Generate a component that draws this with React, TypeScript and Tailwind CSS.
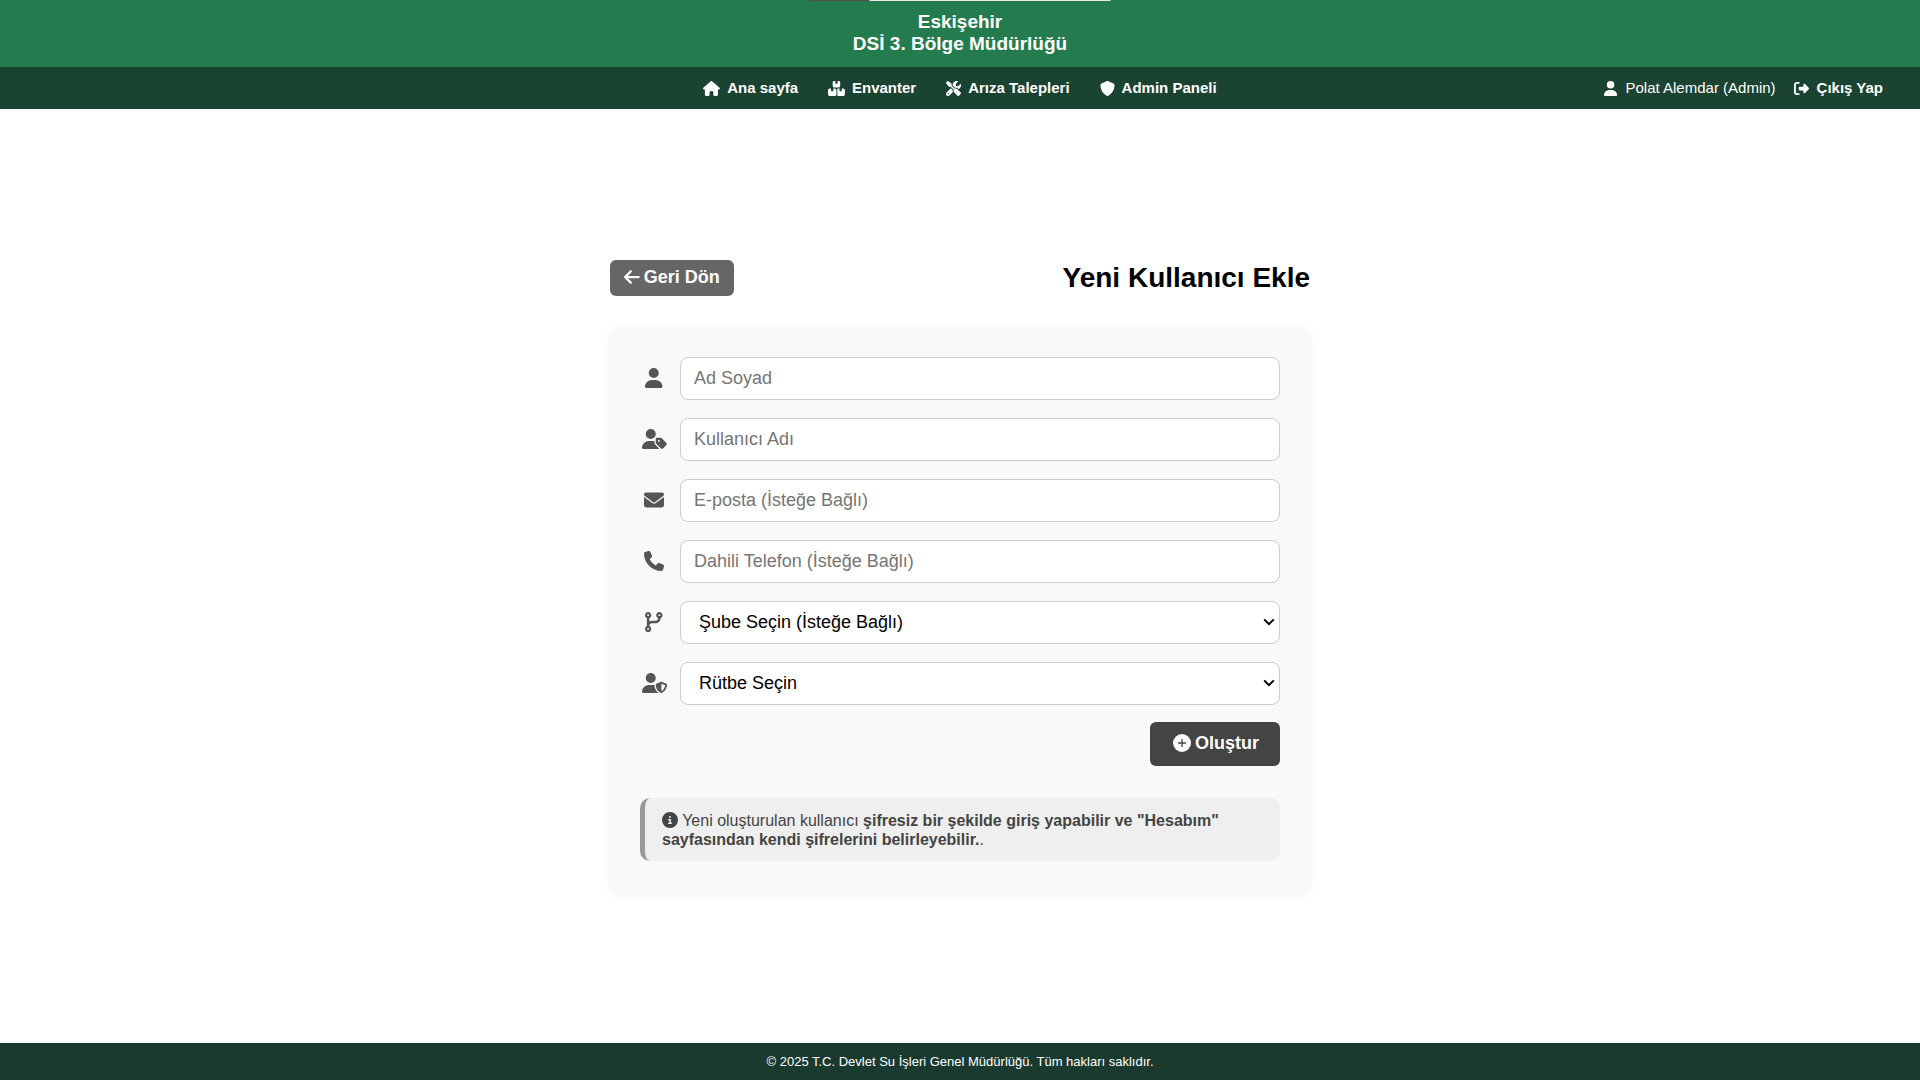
import type { ReactNode } from "react";
import {
  FaArrowLeft,
  FaBoxesStacked,
  FaCircleInfo,
  FaCodeBranch,
  FaEnvelope,
  FaHouse,
  FaPhone,
  FaRightFromBracket,
  FaScrewdriverWrench,
  FaShield,
  FaUser,
  FaUserShield,
  FaUserTag,
} from "react-icons/fa6";

const narrowIcon = "h-[1em] w-[0.875em] shrink-0";
const squareIcon = "h-[1em] w-[1em] shrink-0";
const wideIcon = "h-[1em] w-[1.125em] shrink-0";
const extraWideIcon = "h-[1em] w-[1.25em] shrink-0";

const navItems = [
  { label: "Ana sayfa", icon: <FaHouse className={wideIcon} /> },
  { label: "Envanter", icon: <FaBoxesStacked className={wideIcon} /> },
  { label: "Arıza Talepleri", icon: <FaScrewdriverWrench className={squareIcon} /> },
  { label: "Admin Paneli", icon: <FaShield className={squareIcon} /> },
];

const textFields = [
  { id: "full-name", label: "Ad Soyad", type: "text", icon: <FaUser className={narrowIcon} /> },
  { id: "username", label: "Kullanıcı Adı", type: "text", icon: <FaUserTag className={extraWideIcon} /> },
  { id: "email", label: "E-posta (İsteğe Bağlı)", type: "email", icon: <FaEnvelope className={squareIcon} /> },
  { id: "phone", label: "Dahili Telefon (İsteğe Bağlı)", type: "tel", icon: <FaPhone className={squareIcon} /> },
];

const selectFields = [
  { id: "branch", label: "Şube Seçin (İsteğe Bağlı)", icon: <FaCodeBranch className={narrowIcon} /> },
  { id: "rank", label: "Rütbe Seçin", icon: <FaUserShield className={extraWideIcon} /> },
];

function PlusCircle() {
  return (
    <svg viewBox="0 0 18 18" className="size-[18px] shrink-0" aria-hidden="true">
      <circle cx="9" cy="9" r="9" fill="currentColor" />
      <path d="M9 5.5v7M5.5 9h7" stroke="#444444" strokeWidth="1.3" strokeLinecap="round" />
    </svg>
  );
}

function Chevron() {
  return (
    <svg
      viewBox="0 0 12 8"
      className="pointer-events-none absolute top-1/2 right-[5px] h-2 w-3 -translate-y-1/2"
      aria-hidden="true"
    >
      <path d="M1.2 1.4 6 6.2l4.8-4.8" fill="none" stroke="black" strokeWidth="2" />
    </svg>
  );
}

function FieldRow({ id, label, icon, children }: { id: string; label: string; icon: ReactNode; children: ReactNode }) {
  return (
    <div className="flex items-center gap-3">
      <label htmlFor={id} aria-label={label} className="flex w-7 shrink-0 justify-center text-xl text-[#555555]">
        {icon}
      </label>
      {children}
    </div>
  );
}

export default function App() {
  return (
    <div className="relative flex min-h-screen flex-col bg-white font-['Liberation_Sans',Arial,sans-serif] text-black">
      <div className="absolute top-0 left-1/2 flex h-px w-[301px] -translate-x-1/2">
        <div className="w-[60px] bg-[#554c4c]" />
        <div className="flex-1 bg-[#e8e8e8]" />
      </div>

      <header className="bg-[#247b4d] pt-[11px] pb-3 text-center text-[19px] leading-[22px] font-bold text-white">
        <p>Eskişehir</p>
        <p>DSİ 3. Bölge Müdürlüğü</p>
      </header>

      <nav className="grid h-[42px] grid-cols-[1fr_auto_1fr] items-center bg-[#1b4332] px-[37px] text-[15px] text-white">
        <ul className="col-start-2 flex gap-[30px] font-bold">
          {navItems.map((item) => (
            <li key={item.label}>
              <a href="#" className="flex items-center gap-[7px]">
                {item.icon}
                {item.label}
              </a>
            </li>
          ))}
        </ul>
        <div className="flex items-center justify-end gap-[18px]">
          <span className="flex items-center gap-2">
            <FaUser className={narrowIcon} />
            Polat Alemdar (Admin)
          </span>
          <a href="#" className="flex items-center gap-2 font-bold">
            <FaRightFromBracket className={squareIcon} />
            Çıkış Yap
          </a>
        </div>
      </nav>

      <main className="flex flex-1 items-center justify-center">
        <div className="w-full max-w-[700px]">
          <div className="mb-[31px] flex items-center justify-between">
            <a
              href="#"
              className="flex h-9 items-center gap-1 rounded-md bg-[#666666] px-[14px] pb-[2px] text-lg font-bold text-white"
            >
              <FaArrowLeft className={narrowIcon} />
              Geri Dön
            </a>
            <h1 className="text-[28px] leading-8 font-bold">Yeni Kullanıcı Ekle</h1>
          </div>

          <form className="rounded-xl bg-[#f9f9f9] px-[30px] pt-[30px] pb-8 shadow-[0_2px_10px_rgba(0,0,0,0.05)]">
            <div className="flex flex-col gap-[18px]">
              {textFields.map((field) => (
                <FieldRow key={field.id} id={field.id} label={field.label} icon={field.icon}>
                  <input
                    id={field.id}
                    type={field.type}
                    placeholder={field.label}
                    className="h-[43px] min-w-0 flex-1 rounded-lg border border-[#cccccc] bg-white px-[13px] text-lg placeholder:text-[#757575]"
                  />
                </FieldRow>
              ))}
              {selectFields.map((field) => (
                <FieldRow key={field.id} id={field.id} label={field.label} icon={field.icon}>
                  <div className="relative min-w-0 flex-1">
                    <select
                      id={field.id}
                      className="block h-[43px] w-full appearance-none rounded-lg border border-[#cccccc] bg-white pr-6 pl-[18px] text-lg"
                    >
                      <option>{field.label}</option>
                    </select>
                    <Chevron />
                  </div>
                </FieldRow>
              ))}
            </div>

            <div className="mt-[17px] flex justify-end">
              <button
                type="submit"
                className="flex h-11 items-center gap-1 rounded-md bg-[#444444] pr-[21px] pb-[2px] pl-[23px] text-lg font-bold text-white"
              >
                <PlusCircle />
                Oluştur
              </button>
            </div>

            <p className="mt-8 rounded-[10px] border-l-[5px] border-[#999999] bg-[#efefef] pt-[13px] pr-[17px] pb-3 pl-[17px] text-base leading-[19px] text-[#444444]">
              <FaCircleInfo className="inline h-[1em] w-[1em] align-[-2px]" /> Yeni oluşturulan kullanıcı{" "}
              <strong>şifresiz bir şekilde giriş yapabilir ve "Hesabım" sayfasından kendi şifrelerini belirleyebilir.</strong>.
            </p>
          </form>
        </div>
      </main>

      <footer className="bg-[#1b3a2f] py-[9px] text-center text-[13px] leading-[19px] text-white">
        © 2025 T.C. Devlet Su İşleri Genel Müdürlüğü. Tüm hakları saklıdır.
      </footer>
    </div>
  );
}
